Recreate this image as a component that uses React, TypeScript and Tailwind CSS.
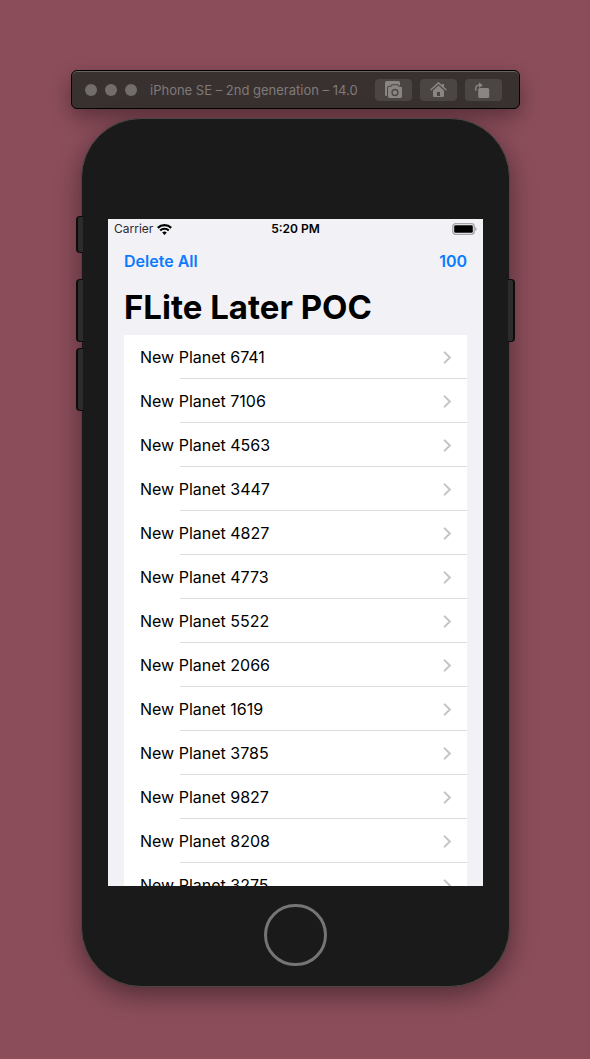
const planets = [
  6741, 7106, 4563, 3447, 4827, 4773, 5522, 2066, 1619, 3785, 9827, 8208, 3275,
];

function ScreenshotIcon() {
  return (
    <svg className="h-[18px] w-[17px]" viewBox="0 0 17 18" fill="#8a8483" aria-hidden="true">
      <rect x="0" y="0" width="15" height="15" rx="1.5" />
      <path
        d="M7.400 4.200h5.200l1.100 1.600h1.900A1.400 1.400 0 0 1 17 7.200v8.400a1.400 1.400 0 0 1-1.400 1.400H4.400A1.400 1.400 0 0 1 3 15.600V7.200a1.400 1.400 0 0 1 1.400-1.400h1.900z"
        stroke="#4b4544"
        strokeWidth="2"
        paintOrder="stroke"
      />
      <circle cx="10" cy="11.500" r="3" fill="none" stroke="#4b4544" strokeWidth="1.300" />
    </svg>
  );
}

function HomeIcon() {
  return (
    <svg className="h-[18px] w-[17px]" viewBox="0 0 17 18" fill="#8a8483" aria-hidden="true">
      <path d="M1 8.800 8.500 1.900 16 8.800" fill="none" stroke="#8a8483" strokeWidth="1.500" strokeLinecap="round" strokeLinejoin="round" />
      <path d="M12 3h2v4l-2-1.800z" />
      <path
        fillRule="evenodd"
        d="M8.500 4.500 14 9.500v5.500a1 1 0 0 1-1 1H4a1 1 0 0 1-1-1V9.500zM7 11v4h3v-4z"
      />
    </svg>
  );
}

function RotateIcon() {
  return (
    <svg className="h-[18px] w-[17px]" viewBox="0 0 17 18" fill="#8a8483" aria-hidden="true">
      <rect x="3.200" y="7" width="11" height="10" rx="1.600" />
      <path d="M.8 9.300V7A2.800 2.800 0 0 1 3.600 4.200h1" fill="none" stroke="#8a8483" strokeWidth="1.500" strokeLinecap="round" />
      <path d="M4 1.200 7.800 4.200 4 6.900z" />
    </svg>
  );
}

function WifiIcon() {
  return (
    <svg className="h-[11px] w-[15px]" viewBox="0 0 15 11" aria-hidden="true">
      <g fill="none" stroke="#000" strokeWidth="2.200">
        <path d="M.8 3.900a9.500 9.500 0 0 1 13.400 0" />
        <path d="M3.200 6.500a6.100 6.100 0 0 1 8.600 0" />
      </g>
      <path d="M7.500 10.900 5.200 8.600a3.300 3.300 0 0 1 4.600 0z" />
    </svg>
  );
}

function BatteryIcon() {
  return (
    <svg className="h-3 w-[25px]" viewBox="0 0 25 12" role="img" aria-label="Battery full">
      <rect x=".8" y=".7" width="21.400" height="10.600" rx="2.800" fill="none" stroke="#a5a4a8" strokeWidth="1.300" />
      <rect x="2.200" y="2.200" width="18.600" height="7.600" rx="1.400" />
      <path d="M23.200 4v4c.8-.3 1.400-1.100 1.400-2s-.6-1.700-1.400-2z" fill="#a5a4a8" />
    </svg>
  );
}

function Chevron() {
  return (
    <svg className="h-[13px] w-2" viewBox="0 0 8 13" aria-hidden="true">
      <path d="M1.600 1.400 6.900 6.500l-5.300 5.100" fill="none" stroke="#c4c4c7" strokeWidth="2" strokeLinecap="round" strokeLinejoin="round" />
    </svg>
  );
}

const toolButton =
  "flex h-[22px] w-[37px] items-center justify-center rounded-[4px] bg-[#4b4544]";

function Toolbar() {
  return (
    <header className="flex h-[39px] w-full max-w-[449px] items-center rounded-[6px] border border-black bg-[#383130] pr-[17px] pl-[13px] shadow-[inset_0_1px_0_#6b6362,0_8px_20px_rgba(0,0,0,0.35)]">
      <div className="flex gap-2">
        <button aria-label="Close" className="size-3 rounded-full bg-[#726c6b]" />
        <button aria-label="Minimize" className="size-3 rounded-full bg-[#726c6b]" />
        <button aria-label="Zoom" className="size-3 rounded-full bg-[#726c6b]" />
      </div>
      <h2 className="ml-[13px] flex-1 text-[13px] leading-4 whitespace-nowrap text-[#807a79]">
        iPhone SE – 2nd generation – 14.0
      </h2>
      <div className="flex gap-2">
        <button aria-label="Take screenshot" className={toolButton}>
          <ScreenshotIcon />
        </button>
        <button aria-label="Home" className={toolButton}>
          <HomeIcon />
        </button>
        <button aria-label="Rotate" className={toolButton}>
          <RotateIcon />
        </button>
      </div>
    </header>
  );
}

function Screen() {
  return (
    <main className="flex aspect-[375/667] w-full flex-col overflow-hidden bg-[#f2f1f6] text-black">
      <div className="grid h-5 shrink-0 grid-cols-3 items-center px-1.5 text-[12px] leading-4">
        <div className="flex items-center gap-1 text-[#2b2b2d]">
          Carrier
          <WifiIcon />
        </div>
        <time className="text-center font-semibold">5:20 PM</time>
        <div className="flex justify-end">
          <BatteryIcon />
        </div>
      </div>
      <nav className="flex h-11 shrink-0 items-center justify-between px-4 text-[16px] leading-5 font-semibold text-[#0a7bff]">
        <button>Delete All</button>
        <button>100</button>
      </nav>
      <h1 className="h-[52px] shrink-0 px-4 pt-1 text-[33px] leading-10 font-bold whitespace-nowrap">
        FLite Later POC
      </h1>
      <ul className="mx-4 bg-white">
        {planets.map((planet) => (
          <li key={planet}>
            <a href="#" className="flex h-[43px] items-center justify-between px-4 pt-px text-[16px] leading-5">
              New Planet {planet}
              <Chevron />
            </a>
            <div className="ml-14 h-px bg-[#dcdcde]" />
          </li>
        ))}
      </ul>
    </main>
  );
}

const sideButton = "absolute w-[7px] border border-[#0c0c0c] bg-[#2c2c2c]";

function Phone() {
  return (
    <div className="relative mt-[9px] w-full max-w-[429px]">
      <div className="flex flex-col items-center rounded-[60px] border border-[#4a4546] bg-[#1a1a1a] px-[26px] pt-[100px] pb-5 shadow-[0_8px_26px_rgba(0,0,0,0.42)]">
        <Screen />
        <button aria-label="Home button" className="mt-[18px] h-[62px] w-[63px] rounded-full border-3 border-[#757575]" />
      </div>
      <div className={`${sideButton} top-[98px] -left-[5px] h-[37px] rounded-l-[4px] border-r-0 border-l-2`} />
      <div className={`${sideButton} top-[161px] -left-[5px] h-[63px] rounded-l-[4px] border-r-0 border-l-2`} />
      <div className={`${sideButton} top-[230px] -left-[5px] h-[63px] rounded-l-[4px] border-r-0 border-l-2`} />
      <div className={`${sideButton} top-[161px] -right-[5px] h-[63px] rounded-r-[4px] border-r-2 border-l-0`} />
    </div>
  );
}

export default function App() {
  return (
    <div className="flex min-h-screen flex-col items-center bg-[#8b4d5a] pt-[70px] pb-[72px] pl-px font-[Inter,sans-serif]">
      <Toolbar />
      <Phone />
    </div>
  );
}
